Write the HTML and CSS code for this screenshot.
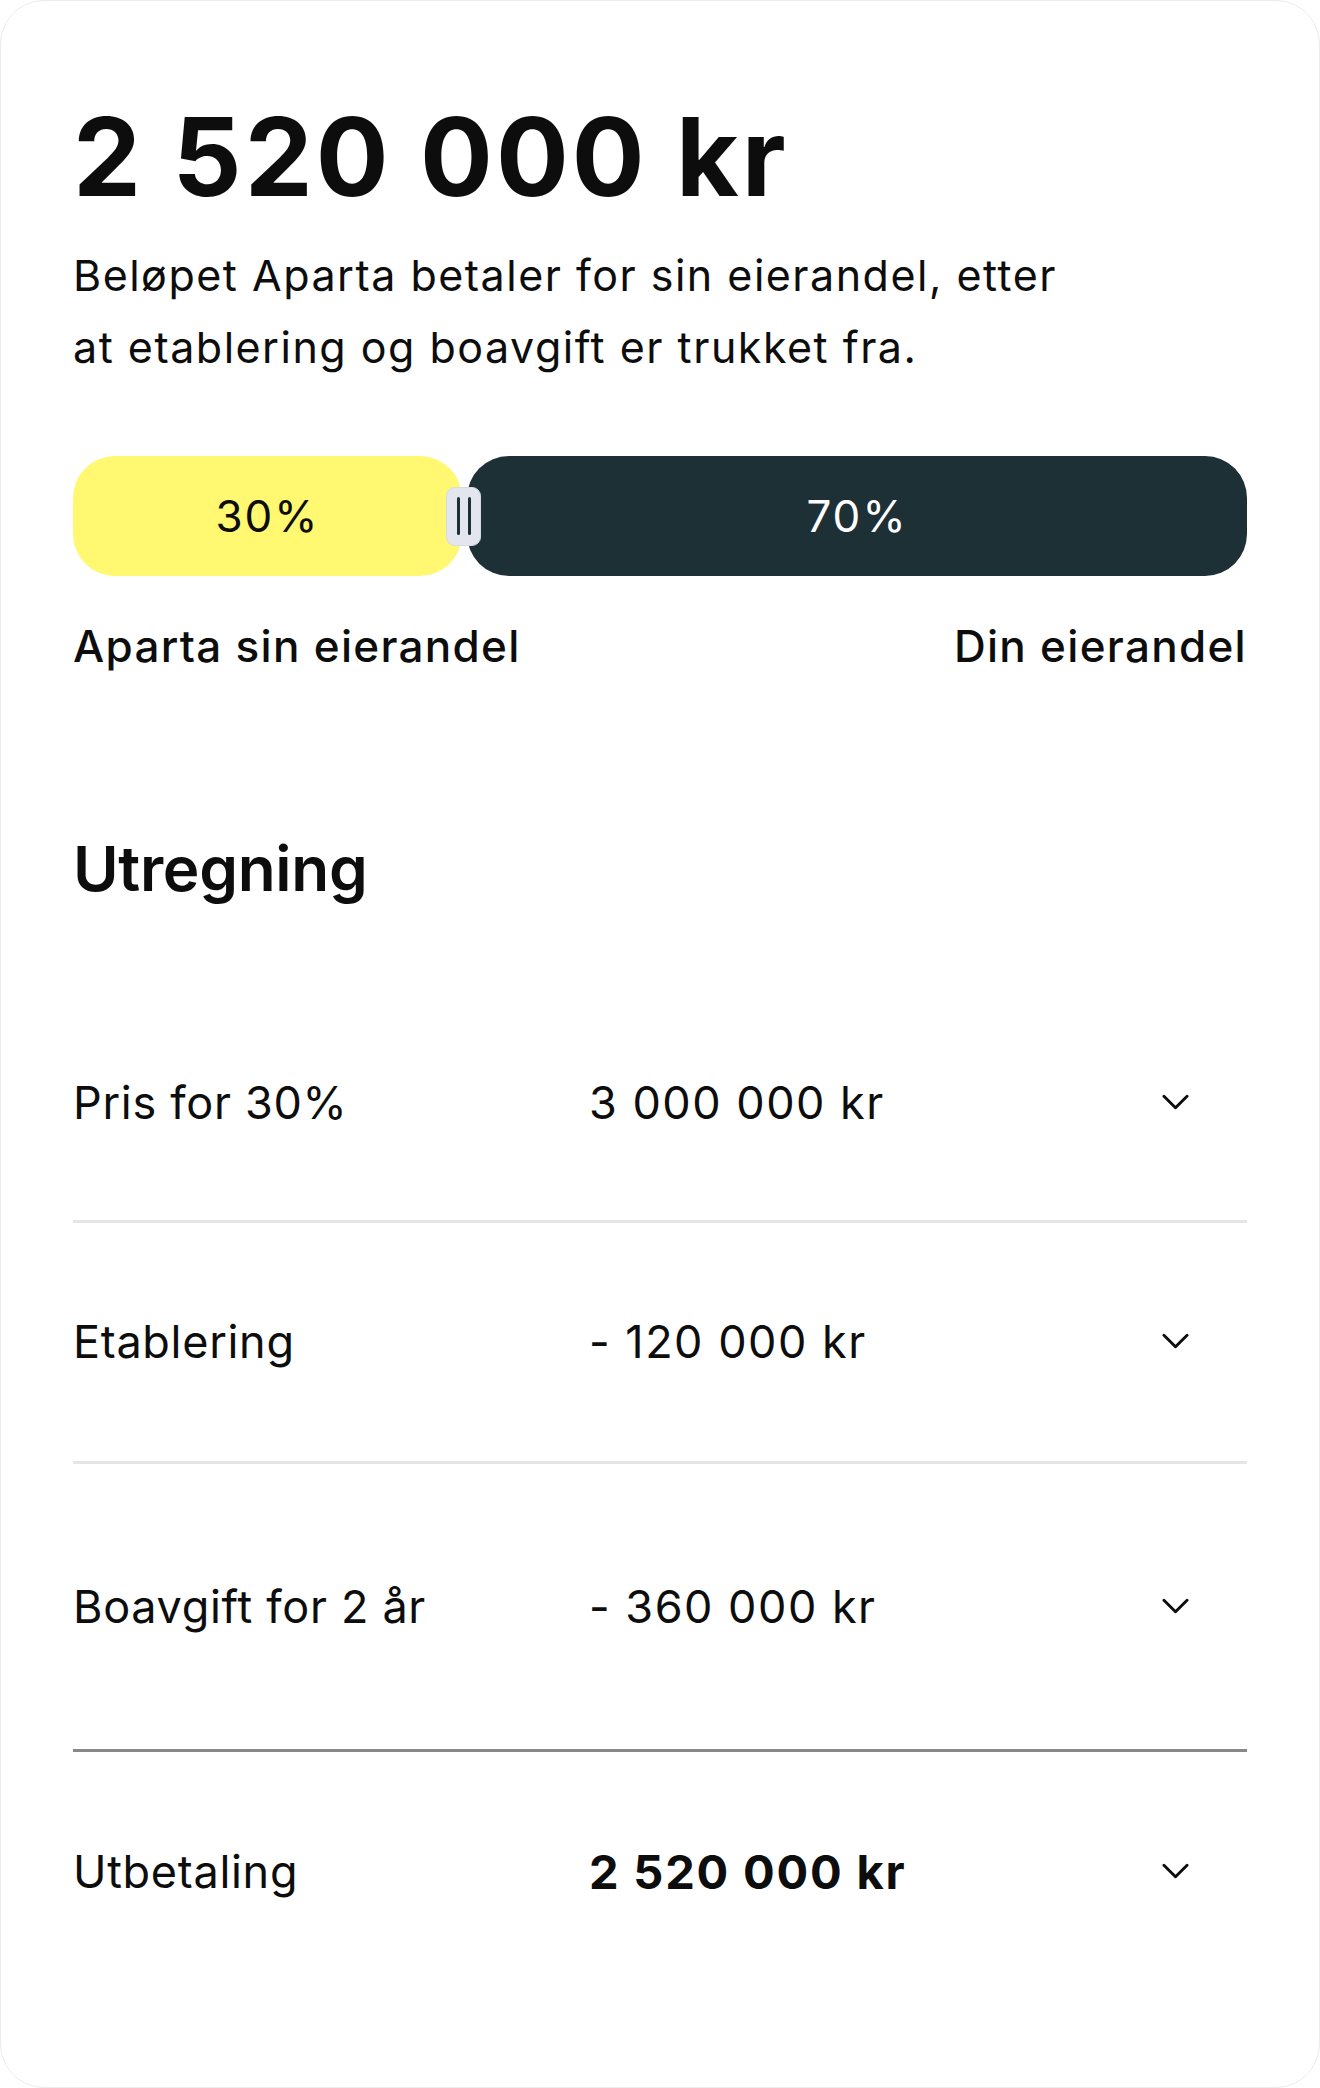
FILE: index.html
```html
<!DOCTYPE html>
<html lang="no">
<head>
    <meta charset="UTF-8">
    <meta name="viewport" content="width=device-width, initial-scale=1.0">
    <title>Utbetaling</title>
    <link rel="stylesheet" href="styles.css">
</head>
<body>
    <div class="card">
        <h1 class="amount">2 520 000 kr</h1>
        <p class="intro">Beløpet Aparta betaler for sin eierandel, etter<br>at etablering og boavgift er trukket fra.</p>

        <div class="split">
            <div class="split-part aparta">30%</div>
            <div class="split-part yours">70%</div>
            <div class="handle"><span></span><span></span></div>
        </div>
        <div class="split-labels">
            <span>Aparta sin eierandel</span>
            <span>Din eierandel</span>
        </div>

        <h2 class="heading">Utregning</h2>

        <div class="rows">
            <div class="row">
                <span class="row-label">Pris for 30%</span>
                <span class="row-value">3 000 000 kr</span>
                <svg class="chevron" viewBox="0 0 28 17"><path d="M2 2l12 12L26 2"/></svg>
            </div>
            <div class="row">
                <span class="row-label">Etablering</span>
                <span class="row-value">- 120 000 kr</span>
                <svg class="chevron" viewBox="0 0 28 17"><path d="M2 2l12 12L26 2"/></svg>
            </div>
            <div class="row row-wide">
                <span class="row-label">Boavgift for 2 år</span>
                <span class="row-value">- 360 000 kr</span>
                <svg class="chevron" viewBox="0 0 28 17"><path d="M2 2l12 12L26 2"/></svg>
            </div>
            <div class="row row-total">
                <span class="row-label">Utbetaling</span>
                <span class="row-value">2 520 000 kr</span>
                <svg class="chevron" viewBox="0 0 28 17"><path d="M2 2l12 12L26 2"/></svg>
            </div>
        </div>
    </div>
</body>
</html>
```

FILE: styles.css
```css
body, html {
    margin: 0;
    padding: 0;
    background: #fff;
    font-family: Inter, "Noto Sans", Arial, sans-serif;
    color: #0d0d0d;
}

.card {
    box-sizing: border-box;
    width: 1320px;
    height: 2088px;
    padding: 91px 72px 0 72px;
    border: 1px solid #ececec;
    border-radius: 44px;
    background: #fff;
}

.amount {
    margin: 0;
    font-size: 108px;
    line-height: 1.2;
    font-weight: 700;
    letter-spacing: 3px;
}

.intro {
    margin: 17px 0 0 0;
    font-size: 43px;
    line-height: 72px;
    font-weight: 400;
    letter-spacing: 1.5px;
}

.split {
    position: relative;
    display: flex;
    gap: 5px;
    height: 120px;
    margin-top: 73px;
}

.split-part {
    display: flex;
    align-items: center;
    justify-content: center;
    border-radius: 42px;
    font-size: 44px;
    font-weight: 400;
    letter-spacing: 2px;
}

.aparta {
    flex: 0 0 389px;
    background: #fff870;
    color: #0d0d0d;
}

.yours {
    flex: 1;
    background: #1d3036;
    color: #fff;
}

.handle {
    position: absolute;
    left: 373px;
    top: 31px;
    width: 35px;
    height: 59px;
    box-sizing: border-box;
    border: 1px solid #d6dae5;
    border-radius: 9px;
    background: #e3e6ef;
    display: flex;
    align-items: center;
    justify-content: center;
    gap: 8px;
}

.handle span {
    width: 3px;
    height: 38px;
    border-radius: 2px;
    background: #1d3036;
}

.split-labels {
    display: flex;
    justify-content: space-between;
    margin-top: 44px;
    font-size: 44px;
    line-height: 1.2;
    font-weight: 500;
    letter-spacing: 1.3px;
}

.heading {
    margin: 160px 0 0 0;
    font-size: 62px;
    line-height: 1.2;
    font-weight: 600;
    letter-spacing: -0.3px;
}

.rows {
    margin-top: 77px;
}

.row {
    display: grid;
    grid-template-columns: 516px 1fr 27px;
    align-items: center;
    padding: 92px 58px 92px 0;
    font-size: 45px;
    line-height: 54px;
    border-bottom: 3px solid #e5e5e5;
}

.row:first-child {
    padding-bottom: 90px;
}

.row-label {
    letter-spacing: 0.7px;
}

.row-value {
    letter-spacing: 1.5px;
}

.row-wide {
    padding-top: 116px;
    padding-bottom: 115px;
    border-bottom-color: #888;
}

.row-total {
    border-bottom: none;
    padding-top: 93px;
}

.row-total .row-value {
    font-weight: 700;
    font-size: 47px;
    letter-spacing: 1.8px;
}

.chevron {
    width: 27px;
    height: 17px;
    fill: none;
    stroke: #0d0d0d;
    stroke-width: 3;
    stroke-linecap: round;
    stroke-linejoin: round;
}
```
